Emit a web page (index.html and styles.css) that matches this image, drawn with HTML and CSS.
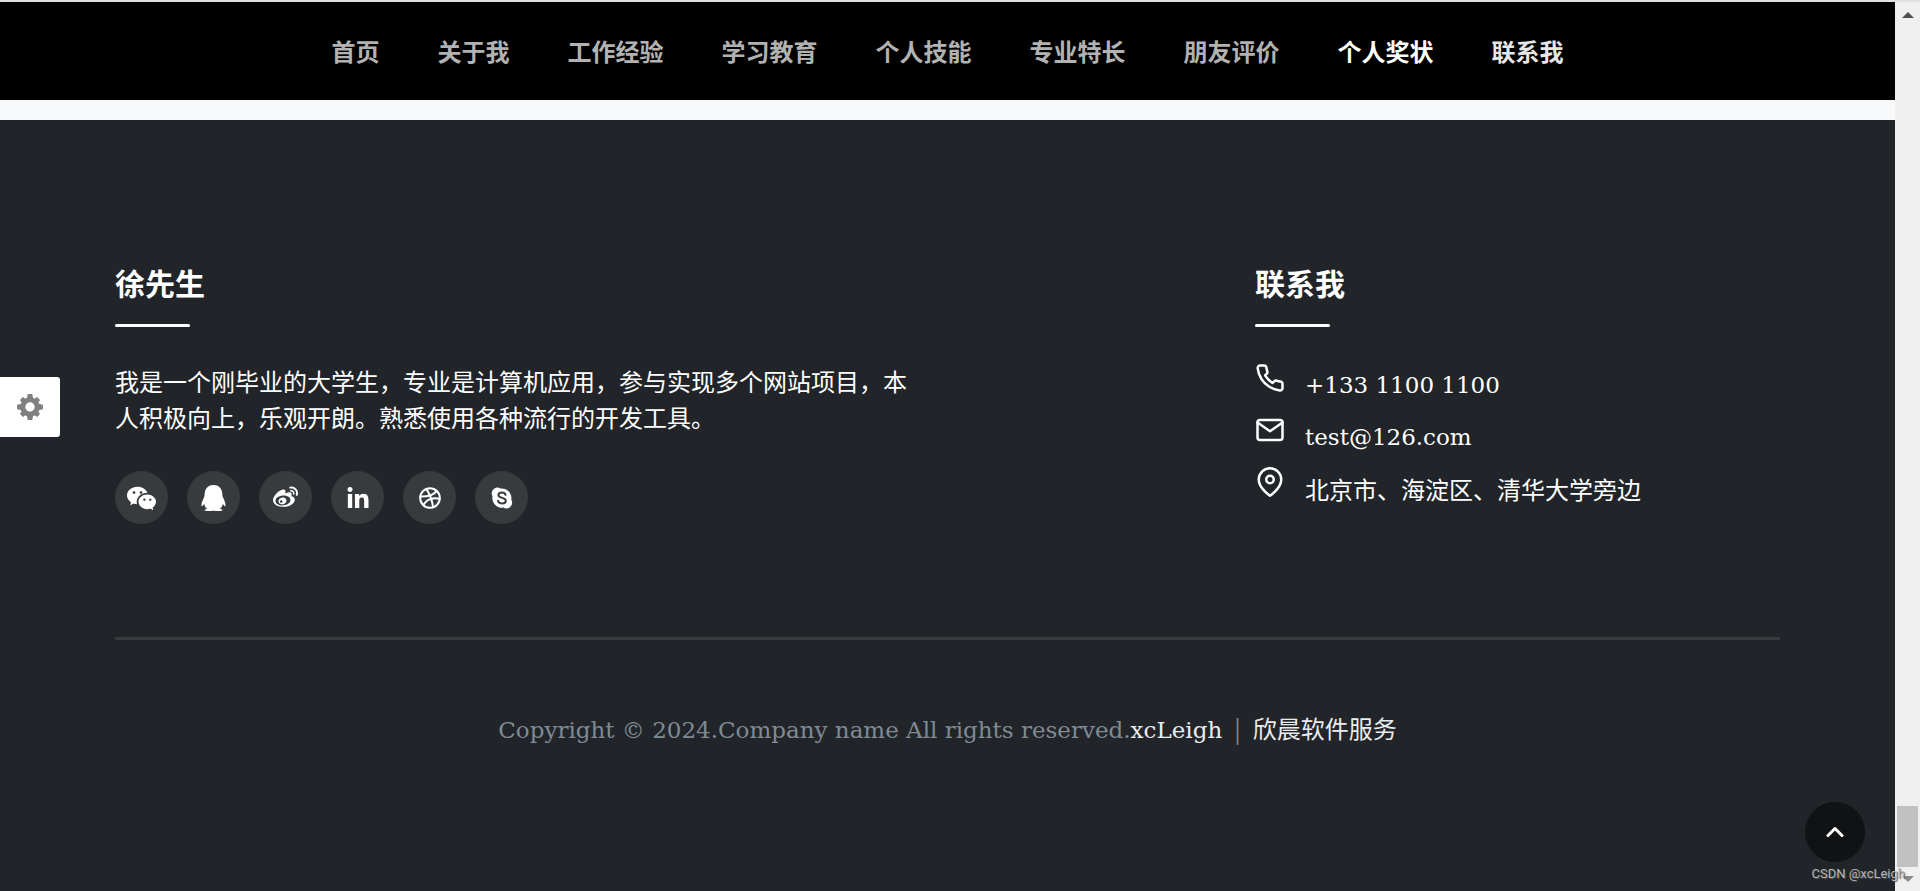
FILE: index.html
```html
<!DOCTYPE html>
<html lang="zh-CN">
<head>
<meta charset="utf-8">
<meta name="viewport" content="width=device-width, initial-scale=1">
<title>徐先生</title>
<link rel="stylesheet" href="styles.css">
</head>
<body>
<div class="window">
  <div class="page">
    <header class="header">
      <nav class="nav">
        <a href="#home">首页</a>
        <a href="#about">关于我</a>
        <a href="#work">工作经验</a>
        <a href="#education">学习教育</a>
        <a href="#skills">个人技能</a>
        <a href="#speciality">专业特长</a>
        <a href="#reviews">朋友评价</a>
        <a class="is-active" href="#awards">个人奖状</a>
        <a class="is-next" href="#contact">联系我</a>
      </nav>
    </header>
    <footer class="footer" id="contact">
      <div class="columns">
        <section class="about">
          <h2 class="title">徐先生</h2>
          <p class="intro">我是一个刚毕业的大学生，专业是计算机应用，参与实现多个网站项目，本人积极向上，乐观开朗。熟悉使用各种流行的开发工具。</p>
          <div class="social">
            <a href="#wechat" aria-label="微信"><svg width="29" height="29" viewBox="0 0 16 16"><path d="M11.176 14.429c-2.665 0-4.826-1.8-4.826-4.018 0-2.22 2.159-4.02 4.824-4.02S16 8.191 16 10.411c0 1.21-.65 2.301-1.666 3.036a.32.32 0 0 0-.12.366l.218.81a.6.6 0 0 1 .029.117.166.166 0 0 1-.162.162.2.2 0 0 1-.092-.03l-1.057-.61a.5.5 0 0 0-.256-.074.5.5 0 0 0-.142.021 5.7 5.7 0 0 1-1.576.22M9.064 9.542a.647.647 0 1 0 .557-1 .645.645 0 0 0-.646.647.6.6 0 0 0 .09.353Zm3.232.001a.646.646 0 1 0 .546-1 .645.645 0 0 0-.644.644.63.63 0 0 0 .098.356"/><path d="M0 6.826c0 1.455.781 2.765 2.001 3.656a.385.385 0 0 1 .143.439l-.161.6-.1.373a.5.5 0 0 0-.032.14.19.19 0 0 0 .193.193q.06 0 .111-.029l1.268-.733a.6.6 0 0 1 .308-.088q.088 0 .171.025a6.8 6.8 0 0 0 1.625.26 4.5 4.5 0 0 1-.177-1.251c0-2.936 2.785-5.02 5.824-5.02l.15.002C10.587 3.429 8.392 2 5.796 2 2.596 2 0 4.16 0 6.826m4.632-1.555a.77.77 0 1 1-1.54 0 .77.77 0 0 1 1.54 0m3.875 0a.77.77 0 1 1-1.54 0 .77.77 0 0 1 1.54 0"/></svg></a>
            <a href="#qq" aria-label="QQ"><svg width="25" height="26" viewBox="0 0 448 512" preserveAspectRatio="none"><path d="M433.754 420.445c-11.526 1.393-44.86-52.741-44.86-52.741 0 31.345-16.136 72.247-51.051 101.786 16.842 5.192 54.843 19.167 45.803 34.421-7.316 12.343-125.51 7.881-159.632 4.037-34.122 3.844-152.316 8.306-159.632-4.037-9.045-15.25 28.918-29.214 45.783-34.415-34.92-29.539-51.059-70.445-51.059-101.792 0 0-33.334 54.134-44.859 52.741-5.37-.65-12.424-29.644 9.347-99.704 10.261-33.024 21.995-60.478 40.144-105.779C60.683 98.063 108.982.006 224 0c113.737.006 163.156 96.133 160.264 214.963 18.118 45.223 29.912 72.85 40.144 105.778 21.768 70.06 14.716 99.053 9.346 99.704z"/></svg></a>
            <a href="#weibo" aria-label="微博"><svg width="25" height="25" viewBox="0 0 512 512"><path d="M407 177.6c7.6-24-13.4-46.8-37.4-41.7-22 4.8-28.8-28.1-7.1-32.8 50.1-10.9 92.3 37.1 76.5 84.8-6.8 21.2-38.8 10.8-32-10.3zM214.8 446.7C108.5 446.7 0 395.3 0 310.4c0-44.3 28-95.4 76.3-143.7C176 67 279.5 65.8 249.9 161c-4 13.1 12.3 5.7 12.3 6 79.5-33.6 140.5-16.8 114 51.4-3.7 9.4 1.1 10.9 8.3 13.1 135.7 42.3 34.8 215.2-169.7 215.2zm143.7-146.3c-5.4-55.7-78.5-94-163.4-85.7-84.8 8.6-148.8 60.3-143.4 116s78.5 94 163.4 85.7c84.8-8.6 148.8-60.3 143.4-116zM347.9 35.1c-25.9 5.6-16.8 43.7 8.3 38.3 72.3-15.2 134.8 52.8 111.7 124-7.4 24.2 29.1 37 37.4 12 31.9-99.8-55.1-195.9-157.4-174.3zm-78.5 311c-17.1 38.8-66.8 60-109.1 46.3-40.8-13.1-58-53.4-40.3-89.7 17.7-35.4 63.1-55.4 103.4-45.1 42 10.8 63.1 50.2 46 88.5zm-86.3-30c-12.9-5.4-30 .3-38 12.9-8.3 12.9-4.3 28 8.6 34 13.1 6 30.8.3 39.1-12.9 8-13.1 3.7-28.3-9.7-34z"/></svg></a>
            <a href="#linkedin" aria-label="LinkedIn"><svg width="22" height="21" viewBox="0 0 448 448"><path d="M100.28 448H7.4V148.9h92.88zM53.79 108.1C24.09 108.1 0 83.5 0 53.8a53.79 53.79 0 0 1 107.58 0c0 29.7-24.1 54.3-53.79 54.3zM447.9 448h-92.68V302.4c0-34.7-.7-79.2-48.29-79.2-48.29 0-55.69 37.7-55.69 76.7V448h-92.78V148.9h89.08v40.8h1.3c12.4-23.5 42.69-48.3 87.88-48.3 94 0 111.28 61.9 111.28 142.3V448z"/></svg></a>
            <a href="#dribbble" aria-label="Dribbble"><svg class="line" width="22" height="22" viewBox="0 0 22 22" stroke-width="2"><circle cx="11" cy="11" r="9.8"/><path d="M7.3 2.2c3.2 4.3 5.4 9.4 6.8 17.6M1.4 9.6c7 .2 12.500-.9 16.300-5.600M4.300 18c3.200-5.200 8-8.200 16.300-6.200"/></svg></a>
            <a href="#skype" aria-label="Skype"><svg width="22" height="22" viewBox="0 0 22 22"><path d="M6.300.6a5.800 5.800 0 0 1 3.200 1A9.600 9.600 0 0 1 20.300 12.700a5.800 5.800 0 0 1-7.900 7.900A9.600 9.600 0 0 1 1.500 9.300 5.800 5.800 0 0 1 6.300.6z"/><path class="skype-curve" d="M14.600 7.800C14 6.200 12.800 5.600 11 5.600c-2.200 0-3.600 1-3.600 2.500 0 3.600 7.500 2 7.500 5.700 0 1.700-1.600 2.700-3.900 2.700-2.100 0-3.500-.9-4-2.700"/></svg></a>
          </div>
        </section>
        <section class="contact">
          <h2 class="title">联系我</h2>
          <address class="contact-list">
            <div class="contact-row"><svg class="line" width="30" height="30" viewBox="0 0 24 24" stroke-width="2"><path d="M22 16.920v3a2 2 0 0 1-2.180 2 19.790 19.790 0 0 1-8.630-3.070 19.500 19.500 0 0 1-6-6 19.790 19.790 0 0 1-3.070-8.670A2 2 0 0 1 4.110 2h3a2 2 0 0 1 2 1.720c.127.960.361 1.903.7 2.810a2 2 0 0 1-.450 2.110L8.090 9.910a16 16 0 0 0 6 6l1.270-1.270a2 2 0 0 1 2.110-.450c.907.339 1.850.573 2.810.7A2 2 0 0 1 22 16.920z"/></svg><span class="latin">+133 1100 1100</span></div>
            <div class="contact-row"><svg class="line" width="30" height="30" viewBox="0 0 24 24" stroke-width="2"><path d="M4 4h16c1.100 0 2 .9 2 2v12c0 1.100-.9 2-2 2H4c-1.100 0-2-.9-2-2V6c0-1.100.9-2 2-2z"/><path d="M22 6l-10 7L2 6"/></svg><span class="latin">test@126.com</span></div>
            <div class="contact-row"><svg class="line" width="30" height="30" viewBox="0 0 24 24" stroke-width="2"><path d="M21 10c0 7-9 13-9 13s-9-6-9-13a9 9 0 0 1 18 0z"/><circle cx="12" cy="10" r="3"/></svg><span>北京市、海淀区、清华大学旁边</span></div>
          </address>
        </section>
      </div>
      <p class="copyright"><span class="latin">Copyright © 2024.Company name All rights reserved.<a href="#author">xcLeigh</a></span><span class="bar">|</span><a href="#company">欣晨软件服务</a></p>
    </footer>
    <button class="settings" type="button" aria-label="设置"><svg width="26" height="26" viewBox="-13 -13 26 26"><g id="teeth"><path d="M-3.200-8L-2.300-13h4.600L3.200-8zM-3.200 8L-2.300 13h4.600L3.200 8zM8-3.200L13-2.300v4.600L8 3.200zM-8-3.200L-13-2.300v4.600L-8 3.200z"/></g><use href="#teeth" transform="rotate(45) scale(.93)"/><circle r="7.200" fill="none" stroke="#808080" stroke-width="5"/></svg></button>
    <a class="to-top" href="#home" aria-label="返回顶部"><svg class="line" width="18" height="12" viewBox="0 0 18 12" stroke-width="3"><path d="M2 9.500l7-7 7 7"/></svg></a>
  </div>
  <div class="scrollbar"><span class="arrow-up"></span><span class="thumb"></span><span class="arrow-down"></span></div>
  <span class="watermark">CSDN @xcLeigh</span>
</div>
</body>
</html>
```
FILE: styles.css
```css
* { box-sizing: border-box; }
body {
  margin: 0;
  background: #f8f9fa;
  color: #fff;
  font-family: "Noto Sans CJK SC", sans-serif;
  font-size: 24px;
  line-height: 36px;
}
a { color: inherit; text-decoration: none; }
svg { display: block; flex: none; fill: currentColor; }
.line { fill: none; stroke: currentColor; stroke-linecap: round; stroke-linejoin: round; }
.latin { font-family: "DejaVu Serif", serif; font-size: 23px; }

.window {
  position: relative;
  display: grid;
  grid-template-columns: 1fr 25px;
  min-height: 100vh;
  border-top: 2px solid #dfe0e1;
}
.page { display: flex; flex-direction: column; }

.header { background: #000; padding: 31px 24px; }
.nav {
  display: flex;
  flex-wrap: wrap;
  justify-content: center;
  gap: 0 58px;
  color: #b2b2b2;
  font-weight: 700;
}
.is-active { color: #fff; }
.is-next { color: #e6e6e6; }

.footer {
  flex: 1;
  margin-top: 20px;
  padding: 140px 115px 0;
  background: #212529;
}
.columns {
  display: grid;
  grid-template-columns: repeat(12, 1fr);
  column-gap: 45px;
  padding-bottom: 113px;
  border-bottom: 3px solid #373b3e;
}
.about { grid-column: 1 / span 6; }
.contact { grid-column: 9 / span 4; }
.title {
  margin: 0 0 36px;
  font-size: 30px;
  line-height: 45px;
}
.title::after {
  content: "";
  display: block;
  width: 75px;
  height: 3px;
  margin-top: 19px;
  border-radius: 2px;
  background: #fff;
}
.intro { margin: 0 0 36px; }
.social { display: flex; gap: 19px; }
.social a {
  display: grid;
  place-items: center;
  width: 53px;
  height: 53px;
  border-radius: 50%;
  background: #373b3e;
}
.skype-curve { fill: none; stroke: #373b3e; stroke-width: 2; stroke-linecap: round; }

.contact-list { display: grid; gap: 14px; font-style: normal; }
.contact-row { display: flex; align-items: flex-start; gap: 20px; }
.contact-row span { padding-top: 6px; line-height: 32px; }

.copyright {
  margin: 70px 0 0;
  color: #808a93;
  text-align: center;
}
.copyright a { color: #e9ecef; }
.bar { margin: 0 12px; }

.settings {
  position: fixed;
  top: 377px;
  left: 0;
  display: grid;
  place-items: center;
  width: 60px;
  height: 60px;
  padding: 0;
  border: 0;
  border-radius: 0 3px 3px 0;
  background: #fff;
  color: #808080;
}
.to-top {
  position: fixed;
  right: 55px;
  bottom: 29px;
  display: grid;
  place-items: center;
  width: 60px;
  height: 60px;
  border-radius: 50%;
  background: #101214;
}

.scrollbar {
  display: flex;
  flex-direction: column;
  align-items: center;
  padding: 10px 2px 9px;
  background: #f0f0f0;
}
.arrow-up, .arrow-down { border: 6px solid transparent; }
.arrow-up { border-top: 0; border-bottom-color: #505050; }
.arrow-down { border-bottom: 0; border-top-color: #8a8a8a; }
.thumb {
  width: 100%;
  height: 61px;
  margin: auto 0 9px;
  background: #c1c1c1;
}
.watermark {
  position: absolute;
  right: 15px;
  bottom: 9px;
  color: #b4b4b4;
  font-family: Roboto, sans-serif;
  font-size: 13px;
  line-height: 16px;
  text-shadow: 1px 1px 1px #555;
}
```
